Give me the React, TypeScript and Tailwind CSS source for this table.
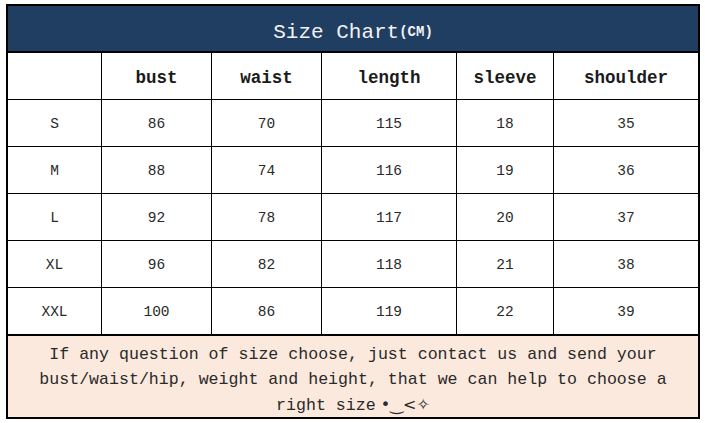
import React from "react"

const mono = { fontFamily: '"Liberation Mono", "DejaVu Sans Mono", monospace' }

const cols = ["", "bust", "waist", "length", "sleeve", "shoulder"]

const rows = [
  ["S", "86", "70", "115", "18", "35"],
  ["M", "88", "74", "116", "19", "36"],
  ["L", "92", "78", "117", "20", "37"],
  ["XL", "96", "82", "118", "21", "38"],
  ["XXL", "100", "86", "119", "22", "39"],
]

const grid = "grid grid-cols-[94px_110px_110px_135px_97px_1fr]"

export default function App() {
  return (
    <div className="w-[705px] h-[423px] bg-white pt-[4px] pl-[6px]" style={mono}>
      <div className="w-[694px] border-2 border-black flex flex-col">
        {/* title band */}
        <div className="h-[47px] pt-[7px] bg-[#203d62] border-b-2 border-black flex items-center justify-center text-[#f2f2f2]">
          <span className="text-[21px] leading-none">Size Chart</span>
          <span className="text-[14px] font-bold leading-none">(CM)</span>
        </div>

        {/* column headers */}
        <div className={`${grid} h-[47px] border-b border-black`}>
          {cols.map((c, i) => (
            <div
              key={i}
              className={`flex items-center justify-center pt-[4px] text-[17.5px] font-bold text-[#1a1a1a] ${i < cols.length - 1 ? "border-r border-black" : ""}`}
            >
              {c}
            </div>
          ))}
        </div>

        {rows.map((r, ri) => (
          <div
            key={r[0]}
            className={`${grid} ${ri < rows.length - 1 ? "h-[47px] border-b border-black" : "h-[46px]"}`}
          >
            {r.map((v, i) => (
              <div
                key={i}
                className={`flex items-center justify-center pt-[4px] text-[14.5px] text-[#2a2a2a] ${i < r.length - 1 ? "border-r border-black" : ""}`}
              >
                {v}
              </div>
            ))}
          </div>
        ))}

        {/* note */}
        <div className="h-[83px] pt-[6px] border-t-2 border-black bg-[#fbe9dd] flex items-center justify-center text-center text-[16.6px] leading-[25px] text-[#2a2a2a]">
          <p>
            If any question of size choose, just contact us and send your
            <br />
            bust/waist/hip, weight and height, that we can help to choose a
            <br />
            right size
            <span style={{ fontFamily: '"DejaVu Sans", sans-serif' }} className="text-[16px]">
              {" "}•‿&lt;✧
            </span>
          </p>
        </div>
      </div>
    </div>
  )
}
